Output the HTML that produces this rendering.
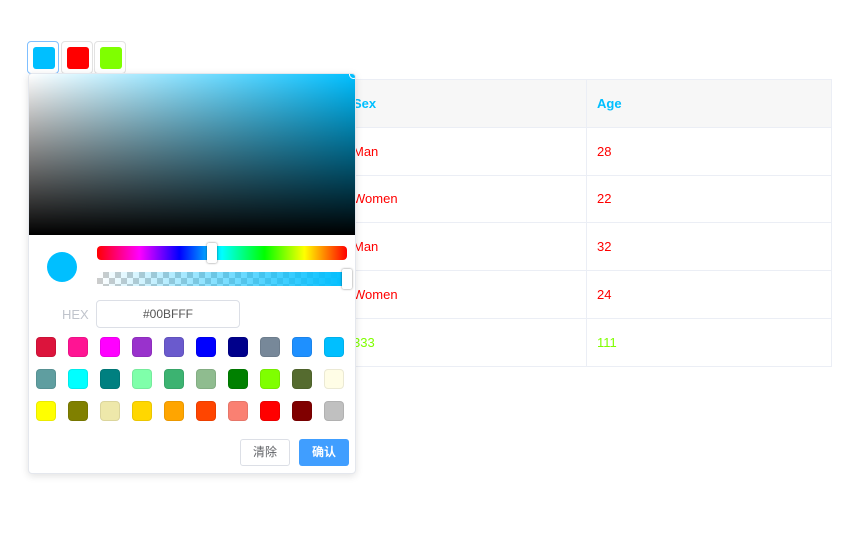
<!DOCTYPE html>
<html><head><meta charset="utf-8"><style>
*{box-sizing:border-box;margin:0;padding:0}
body{width:863px;height:544px;background:#fff;position:relative;overflow:hidden;font-family:"Liberation Sans","Noto Sans CJK SC",sans-serif;font-size:13px}
table{position:absolute;left:30px;top:79px;width:802px;border-collapse:collapse}
td,th{border:1px solid #ebeef5;height:47.8px;padding:0 10px;text-align:left;font-size:13px}
th{background:#f7f7f7;color:#00bfff;font-weight:bold}
.c1{width:312px}.c2{width:244px}
.r{color:#ff0000}.g{color:#7fff00}
.trig{position:absolute;top:41px;width:32px;height:33px;border:1px solid #e2e2e2;border-radius:4px;background:#fff}
.trig i{position:absolute;left:5px;top:5px;width:22px;height:22px;border-radius:3px}
.panel{position:absolute;left:28px;top:73px;width:328px;height:401px;background:#fff;border:1px solid #e4e7ed;border-radius:4px;box-shadow:0 2px 8px rgba(0,0,0,.12);overflow:hidden}
.sv{position:absolute;left:0;top:0;width:326px;height:161px;background:linear-gradient(to top,#000,rgba(0,0,0,0)),linear-gradient(to right,#fff,#00bfff)}
.hue{position:absolute;left:68px;top:172px;width:250px;height:14px;border-radius:4px;background:linear-gradient(to right,#f00,#f0f 17%,#00f 33%,#0ff 50%,#0f0 67%,#ff0 83%,#f00)}
.alpha{position:absolute;left:68px;top:198px;width:250px;height:14px;background:linear-gradient(to right,rgba(0,191,255,0),#00bfff),repeating-conic-gradient(#ccc 0 25%,#fff 0 50%) 0 0/12px 12px}
.thumb{position:absolute;width:10px;height:20px;background:#fff;border-radius:2px;box-shadow:0 0 2px rgba(0,0,0,.5)}
.cur{position:absolute;left:18px;top:178px;width:30px;height:30px;border-radius:50%;background:#00bfff}
.hexl{position:absolute;left:33px;top:233px;color:#c0c4cc;font-size:13px}
.hex{position:absolute;left:67px;top:226px;width:144px;height:28px;border:1px solid #dcdfe6;border-radius:4px;text-align:center;line-height:26px;color:#555;font-size:12px}
.sw{position:absolute;width:20px;height:20px;border-radius:4px;border:1px solid rgba(0,0,0,.08)}
.btn{position:absolute;top:365px;height:27px;width:50px;border-radius:3px;text-align:center;line-height:25px;font-size:12px}
</style></head><body>
<table>
<tr><th class="c1">Name</th><th class="c2">Sex</th><th>Age</th></tr>
<tr><td class="r">a</td><td class="r">Man</td><td class="r">28</td></tr>
<tr><td class="r">b</td><td class="r">Women</td><td class="r">22</td></tr>
<tr><td class="r">c</td><td class="r">Man</td><td class="r">32</td></tr>
<tr><td class="r">d</td><td class="r">Women</td><td class="r">24</td></tr>
<tr><td class="g">x</td><td class="g">333</td><td class="g">111</td></tr>
</table>
<div class="trig" style="left:27px;border-color:#7fbfff"><i style="background:#00bfff"></i></div>
<div class="trig" style="left:61px"><i style="background:#f00"></i></div>
<div class="trig" style="left:94px"><i style="background:#7fff00"></i></div>
<div class="panel">
<div class="sv"></div>
<div style="position:absolute;left:320px;top:-4px;width:9px;height:9px;border:1px solid #fff;border-radius:50%"></div>
<div class="cur"></div>
<div class="hue"></div><div class="thumb" style="left:178px;top:169px"></div>
<div class="alpha"></div><div class="thumb" style="left:313px;top:195px"></div>
<div class="hexl">HEX</div>
<div class="hex">#00BFFF</div>
<div id="sws"></div>
<div class="btn" style="left:211px;border:1px solid #dcdfe6;color:#606266">清除</div>
<div class="btn" style="left:270px;background:#409eff;color:#fff;line-height:27px;font-weight:bold">确认</div>
</div>
<script>
var c=["#dc143c","#ff1493","#ff00ff","#9932cc","#6a5acd","#0000ff","#00008b","#778899","#1e90ff","#00bfff","#5f9ea0","#00ffff","#008080","#7fffaa","#3cb371","#8fbc8f","#008000","#7fff00","#556b2f","#fffde6","#ffff00","#808000","#eee8aa","#ffd700","#ffa500","#ff4500","#fa8072","#ff0000","#800000","#c0c0c0"];
var h="";c.forEach(function(x,i){h+='<div class="sw" style="left:'+(7+(i%10)*32)+'px;top:'+(263+Math.floor(i/10)*32)+'px;background:'+x+'"></div>'});
document.getElementById("sws").innerHTML=h;
</script>
</body></html>
